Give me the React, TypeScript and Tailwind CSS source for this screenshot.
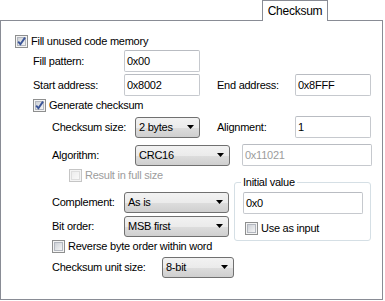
import React from 'react'

const font = { fontFamily: '"Liberation Sans", Arial, sans-serif' }

function CheckBox({ checked = false, disabled = false }: { checked?: boolean; disabled?: boolean }) {
  const outer = disabled ? '#c5c5c5' : '#8e8f8f'
  return (
    <svg width="13" height="13" viewBox="0 0 13 13" className="shrink-0">
      <defs>
        <linearGradient id={disabled ? 'cbd' : 'cb'} x1="0" y1="0" x2="1" y2="1">
          <stop offset="0" stopColor={disabled ? '#ececec' : '#cbcfd5'} />
          <stop offset="1" stopColor={disabled ? '#fafafa' : '#f7f7f7'} />
        </linearGradient>
      </defs>
      <rect x="0.5" y="0.5" width="12" height="12" fill="#f4f4f4" stroke={outer} />
      <rect x="2.5" y="2.5" width="8" height="8" fill={`url(#${disabled ? 'cbd' : 'cb'})`} stroke={disabled ? '#dedede' : '#b3b7bf'} />
      {checked && (
        <path d="M3.2 6.6 L5.4 9.2 L10 2.6" fill="none" stroke="#3b5598" strokeWidth="1.9" />
      )}
    </svg>
  )
}

function TextBox({ value, w, h = 22, disabled = false }: { value: string; w: number; h?: number; disabled?: boolean }) {
  return (
    <div
      className={`shrink-0 flex items-center pl-[2px] rounded-[2px] border border-[#c6c9ce] border-t-[#b9bcc2] bg-white ${disabled ? 'text-[#9c9c9c]' : 'text-black'}`}
      style={{ width: w, height: h }}
    >
      {value}
    </div>
  )
}

function Combo({ value, w }: { value: string; w: number }) {
  return (
    <div
      className="shrink-0 flex items-center justify-between h-[21px] pl-[3px] pr-[5px] rounded-[3px] border border-[#707070] bg-[linear-gradient(#f2f2f2_0%,#ebebeb_50%,#dddddd_51%,#cfcfcf_100%)] text-black"
      style={{ width: w }}
    >
      <span>{value}</span>
      <svg width="7" height="4" viewBox="0 0 7 4">
        <path d="M0 0 H7 L3.5 4 Z" fill="#000" />
      </svg>
    </div>
  )
}

function CheckRow({ label, checked, disabled, className = '' }: { label: string; checked?: boolean; disabled?: boolean; className?: string }) {
  return (
    <div className={`flex items-center h-[13px] gap-[3px] ${className}`}>
      <CheckBox checked={checked} disabled={disabled} />
      <span className={disabled ? 'text-[#9c9c9c]' : 'text-black'}>{label}</span>
    </div>
  )
}

export default function App() {
  return (
    <div className="w-[385px] h-[301px] bg-white text-[11px] leading-none tracking-[-0.25px] text-black" style={font}>
      <div className="h-[20px] flex justify-end pr-[57px]">
        <div className="relative z-10 h-[21px] w-[66px] bg-white border-t border-l border-r border-[#898c95] flex items-center justify-center pb-[1px] text-[12px]">
          Checksum
        </div>
      </div>
      <div className="w-[383px] h-[280px] border border-[#898c95] flex flex-col">
        <CheckRow label="Fill unused code memory" checked className="mt-[14px] pl-[14px]" />

        <div className="flex items-center mt-[2px] h-[22px] pl-[32px]">
          <span className="w-[91px]">Fill pattern:</span>
          <TextBox value="0x00" w={76} />
        </div>

        <div className="flex items-center mt-[2px] h-[22px] pl-[32px]">
          <span className="w-[91px]">Start address:</span>
          <TextBox value="0x8002" w={76} />
          <span className="w-[78px] ml-[17px]">End address:</span>
          <TextBox value="0x8FFF" w={76} />
        </div>

        <CheckRow label="Generate checksum" checked className="mt-[3px] pl-[32px]" />

        <div className="flex items-center mt-[4px] h-[22px] pl-[51px]">
          <span className="w-[83px]">Checksum size:</span>
          <Combo value="2 bytes" w={65} />
          <span className="w-[78px] ml-[17px]">Alignment:</span>
          <TextBox value="1" w={76} />
        </div>

        <div className="flex items-center mt-[6px] h-[22px] pl-[51px]">
          <span className="w-[83px]">Algorithm:</span>
          <Combo value="CRC16" w={95} />
          <span className="ml-[12px]" />
          <TextBox value="0x11021" w={130} disabled />
        </div>

        <div className="flex">
          <div className="w-[233px] flex flex-col">
            <CheckRow label="Result in full size" disabled className="mt-[3px] pl-[68px]" />
            <div className="flex items-center mt-[9px] h-[22px] pl-[51px]">
              <span className="w-[72px]">Complement:</span>
              <Combo value="As is" w={105} />
            </div>
            <div className="flex items-center mt-[2px] h-[22px] pl-[51px]">
              <span className="w-[72px]">Bit order:</span>
              <Combo value="MSB first" w={105} />
            </div>
            <CheckRow label="Reverse byte order within word" className="mt-[3px] pl-[51px] whitespace-nowrap" />
            <div className="flex items-center mt-[3px] h-[22px] pl-[51px]">
              <span className="w-[124px]">Checksum unit size:</span>
              <Combo value="8-bit" w={72} />
            </div>
          </div>

          <div className="relative mt-[16px] w-[137px] h-[59px] rounded-[3px] border border-[#d5dfe5] flex flex-col pl-[8px] pt-[9px]">
            <span className="absolute left-[6px] top-[-6px] bg-white px-[2px]">Initial value</span>
            <TextBox value="0x0" w={120} h={22} />
            <CheckRow label="Use as input" className="mt-[8px] pl-[2px]" />
          </div>
        </div>
      </div>
    </div>
  )
}
